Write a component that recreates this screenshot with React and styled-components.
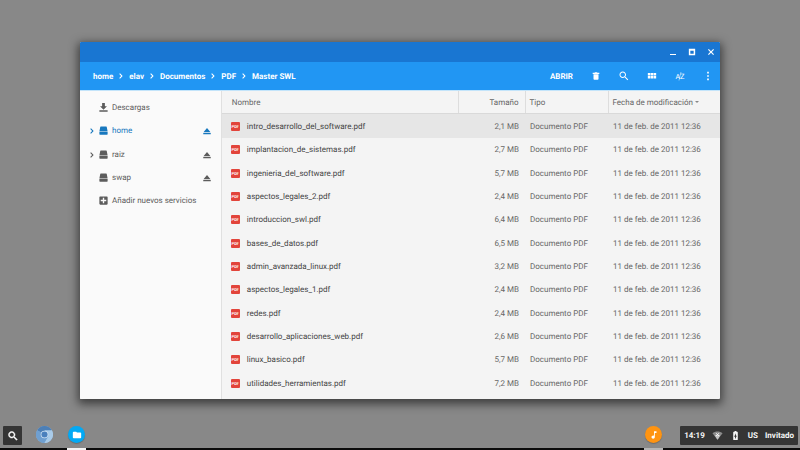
import React, { useState } from 'react';
import styled, { createGlobalStyle } from 'styled-components';

const GlobalStyle = createGlobalStyle`
  body {
    margin: 0;
    background: #888888;
    font-family: Roboto, 'Liberation Sans', sans-serif;
    font-size: 8px;
    text-rendering: geometricPrecision;
  }

  button {
    font: inherit;
    color: inherit;
    background: none;
    border: none;
    padding: 0;
    cursor: pointer;
    text-rendering: inherit;
  }
`;

const Desktop = styled.div`
  display: flex;
  flex-direction: column;
  min-height: 100vh;
`;

const Window = styled.main`
  flex: 1;
  display: flex;
  flex-direction: column;
  margin: 42px 10% 0;
  border-radius: 1px;
  overflow: hidden;
  background: #f4f4f4;
  box-shadow: 0 3px 10px 2px rgba(0, 0, 0, 0.55);
`;

const TitleBar = styled.div`
  display: flex;
  justify-content: flex-end;
  align-items: center;
  gap: 9px;
  height: 20px;
  padding: 0 4px;
  background: #1976d2;
  color: #fff;
`;

const Toolbar = styled.header`
  display: flex;
  justify-content: space-between;
  align-items: center;
  height: 28px;
  padding: 0 7px 0 13px;
  background: #2196f3;
  border-bottom: 1px solid #c3e4fa;
  color: #fff;
  font-weight: 700;
`;

const Breadcrumb = styled.nav`
  display: flex;
  align-items: center;
  gap: 4px;
`;

const Crumb = styled.a`
  color: #fff;
  text-decoration: none;
`;

const Actions = styled.div`
  display: flex;
  align-items: center;
  gap: 18px;
`;

const IconButton = styled.button`
  display: flex;
  align-items: center;
  justify-content: center;
  width: 10px;
  height: 16px;
`;

const TextButton = styled.button`
  height: 16px;
`;

const Icon = styled.svg`
  display: block;
  flex: none;
  width: ${(props) => props.$size || 10}px;
  height: ${(props) => props.$size || 10}px;
  fill: currentColor;
`;

const Body = styled.div`
  flex: 1;
  display: flex;
`;

const Sidebar = styled.aside`
  flex: none;
  width: 22%;
  padding-top: 5px;
  background: #fafafa;
  border-right: 1px solid #e0e0e0;
`;

const Places = styled.ul`
  list-style: none;
  margin: 0;
  padding: 0;
`;

const Place = styled.li`
  display: flex;
  align-items: center;
  height: 23px;
  padding: 0 9px 0 8px;
  margin-bottom: ${(props) => (props.$spaced ? 1 : 0)}px;
  color: ${(props) => (props.$active ? '#1878be' : '#5c5c5c')};
`;

const Expander = styled.span`
  display: flex;
  width: 10px;
`;

const PlaceButton = styled.button`
  flex: 1;
  display: flex;
  align-items: center;
  gap: 3px;
  text-align: left;
`;

const Files = styled.div`
  flex: 1;
  display: flex;
  padding-bottom: 4px;
`;

const Table = styled.table`
  width: 100%;
  table-layout: fixed;
  border-collapse: collapse;
  color: #666;
`;

const Column = styled.col`
  width: ${(props) => props.$width};
`;

const HeadCell = styled.th`
  height: 22px;
  padding: 0 6px 0 ${(props) => (props.$first ? 10 : 4)}px;
  border-bottom: 1px solid #d9d9d9;
  border-left: ${(props) => (props.$first ? 'none' : '1px solid #dddddd')};
  font-weight: 400;
  text-align: ${(props) => props.$align || 'left'};
  white-space: nowrap;
`;

const Row = styled.tr`
  background: ${(props) => (props.$selected ? '#e6e6e6' : 'transparent')};
`;

const Cell = styled.td`
  padding: 0 6px 0 5px;
  text-align: ${(props) => props.$align || 'left'};
  white-space: nowrap;
`;

const FileName = styled.div`
  display: flex;
  align-items: center;
  gap: 7px;
  padding-left: 4px;
  color: #444;
`;

const PdfBadge = styled.span`
  display: flex;
  align-items: center;
  justify-content: center;
  width: 9px;
  height: 9px;
  border-radius: 1px;
  background: #e2443b;
  color: #fff;
  font-size: 4px;
  font-weight: 700;
`;

const SortMark = styled.span`
  display: inline-block;
  margin-left: 2px;
  vertical-align: middle;
  border: 2px solid transparent;
  border-top-color: #888;
  border-bottom: none;
`;

const Shelf = styled.footer`
  display: flex;
  align-items: flex-end;
  height: 49px;
  padding: 0 2px 0 3px;
  border-bottom: 2px solid #0c0c0c;
`;

const SearchButton = styled.button`
  display: flex;
  align-items: center;
  justify-content: center;
  width: 19px;
  height: 19px;
  margin: 0 13px 3px 0;
  border-radius: 1px;
  background: #353535;
  color: #fff;
`;

const AppButton = styled.button`
  display: flex;
  justify-content: center;
  width: 19px;
  height: 24px;
  margin-bottom: -2px;
  margin-right: ${(props) => props.$gap || 0}px;
  border-bottom: 2px solid ${(props) => props.$mark || '#0c0c0c'};
`;

const AppDisc = styled.span`
  display: flex;
  align-items: center;
  justify-content: center;
  width: 17px;
  height: 17px;
  border-radius: 50%;
  background: ${(props) => props.$color};
  color: #fff;
  box-shadow: 0 1px 1px rgba(0, 0, 0, 0.2);
`;

const Spacer = styled.div`
  flex: 1;
`;

const Tray = styled.div`
  display: flex;
  align-items: center;
  height: 19px;
  margin-bottom: 3px;
  padding: 0 4px;
  border-radius: 1px;
  background: #353535;
  color: #f5f5f5;
  font-weight: 700;
  gap: 7px;
`;

const paths = {
  download: 'M19.500 9H15V2H9v7H4.500l7.500 8 7.500-8zM3 18v3h18v-3H3z',
  disk: 'M6.500 3h11l1.500 1 2 10H3L5 4zM3 15h18v5l-1 1H4l-1-1z',
  add: 'M19 3H5c-1.1 0-2 .9-2 2v14c0 1.1.9 2 2 2h14c1.1 0 2-.9 2-2V5c0-1.1-.9-2-2-2zm-1 10.500h-4.500V18h-3v-4.500H6v-3h4.500V6h3v4.500H18v3z',
  eject: 'M3 17h18v3H3zM12 5L3.500 15h17z',
  trash: 'M6 19c0 1.100.9 2 2 2h8c1.100 0 2-.9 2-2V8H6v11zM20 4h-4.500l-1-1h-5l-1 1H4v3h16V4z',
  search:
    'M15.500 14h-.79l-.28-.27C15.410 12.590 16 11.110 16 9.500 16 5.910 13.090 3 9.500 3S3 5.910 3 9.500 5.910 16 9.500 16c1.610 0 3.090-.59 4.230-1.570l.27.28v.79l5 4.990L20.490 19l-4.990-5zm-6 0C7.010 14 5 11.990 5 9.500S7.010 5 9.500 5 14 7.010 14 9.500 11.990 14 9.500 14z',
  grid: 'M2 5h6v6H2zM9 5h6v6H9zM16 5h6v6h-6zM2 12h6v6H2zM9 12h6v6H9zM16 12h6v6h-6z',
  more: 'M10 2h4v4h-4zM10 10h4v4h-4zM10 18h4v4h-4z',
  chevron: 'M9 4l8 8-8 8-2.300-2.300L12.400 12 6.700 6.300z',
  minimize: 'M3 18h18v3H3z',
  maximize: 'M2.500 2.500h19v19h-19zM7 8v9.500h10V8z',
  close: 'M5.500 3L12 9.500 18.500 3 21 5.500 14.500 12l6.500 6.500-2.500 2.500-6.500-6.500L5.500 21 3 18.500 9.500 12 3 5.500z',
  folder: 'M10 4H4c-1.100 0-2 .9-2 2v12c0 1.100.9 2 2 2h16c1.100 0 2-.9 2-2V8c0-1.100-.9-2-2-2h-8l-2-2z',
  note: 'M12 3v10.550c-.59-.34-1.270-.55-2-.55-2.210 0-4 1.790-4 4s1.790 4 4 4 4-1.790 4-4V7h4V3h-6z',
  battery:
    'M15.670 4H14V2h-4v2H8.330C7.600 4 7 4.600 7 5.330v15.330C7 21.400 7.600 22 8.330 22h7.330c.74 0 1.340-.6 1.340-1.330V5.330C17 4.600 16.400 4 15.670 4zM11 20v-5.500H9L13 7v5.500h2L11 20z',
};

function Glyph({ name, size, weight = 0 }) {
  return (
    <Icon viewBox="0 0 24 24" $size={size} aria-hidden="true">
      <path d={paths[name]} fillRule="evenodd" stroke="currentColor" strokeWidth={weight} />
    </Icon>
  );
}

// A and Z with the slash between them
function SortIcon() {
  return (
    <Icon viewBox="0 0 20 20" $size={10} aria-hidden="true">
      <text x="1" y="16" fontSize="14" fontWeight="400">A</text>
      <text x="10" y="16" fontSize="15" fontWeight="400">Z</text>
      <path d="M12 2L8 19" stroke="currentColor" strokeWidth="1" />
    </Icon>
  );
}

function ChromiumIcon() {
  return (
    <Icon viewBox="0 0 36 36" $size={17} aria-hidden="true">
      <circle cx="18" cy="18" r="18" fill="#8fb8e0" />
      <path d="M18 18L2.400 9A18 18 0 0 1 33.600 9z" fill="#4d7fb6" />
      <path d="M2.400 9A18 18 0 0 0 18 36l8-14-8-4z" fill="#6f9fd0" />
      <path d="M18 36A18 18 0 0 0 33.600 9H18l8 13z" fill="#a9cbe9" />
      <circle cx="18" cy="18" r="8" fill="#d3e4f4" />
      <circle cx="18" cy="18" r="6.500" fill="#4a80bd" />
    </Icon>
  );
}

function WifiIcon() {
  return (
    <Icon viewBox="0 0 24 24" $size={11} aria-hidden="true">
      <path d="M1 7C7 2 17 2 23 7L12 21z" fill="#8c8c8c" />
      <path d="M6 12c4-3 8-3 12 0l-6 9z" fill="#c4c4c4" />
      <path d="M9 7l6 6M15 7l-6 6" stroke="#fff" strokeWidth="2" />
    </Icon>
  );
}

const crumbs = ['home', 'elav', 'Documentos', 'PDF', 'Master SWL'];

const places = [
  { name: 'Descargas', icon: 'download' },
  { name: 'home', icon: 'disk', expand: true, eject: true },
  { name: 'raiz', icon: 'disk', expand: true, eject: true },
  { name: 'swap', icon: 'disk', eject: true },
  { name: 'Añadir nuevos servicios', icon: 'add' },
];

const files = [
  { name: 'intro_desarrollo_del_software.pdf', size: '2,1 MB' },
  { name: 'implantacion_de_sistemas.pdf', size: '2,7 MB' },
  { name: 'ingenieria_del_software.pdf', size: '5,7 MB' },
  { name: 'aspectos_legales_2.pdf', size: '2,4 MB' },
  { name: 'introduccion_swl.pdf', size: '6,4 MB' },
  { name: 'bases_de_datos.pdf', size: '6,5 MB' },
  { name: 'admin_avanzada_linux.pdf', size: '3,2 MB' },
  { name: 'aspectos_legales_1.pdf', size: '2,4 MB' },
  { name: 'redes.pdf', size: '2,4 MB' },
  { name: 'desarrollo_aplicaciones_web.pdf', size: '2,6 MB' },
  { name: 'linux_basico.pdf', size: '5,7 MB' },
  { name: 'utilidades_herramientas.pdf', size: '7,2 MB' },
];

function FileTable() {
  const [selected, setSelected] = useState(0);

  return (
    <Table>
      <colgroup>
        <Column />
        <Column $width="67px" />
        <Column $width="83px" />
        <Column $width="112px" />
      </colgroup>
      <thead>
        <tr>
          <HeadCell $first>Nombre</HeadCell>
          <HeadCell $align="right">Tamaño</HeadCell>
          <HeadCell>Tipo</HeadCell>
          <HeadCell>
            Fecha de modificación
            <SortMark />
          </HeadCell>
        </tr>
      </thead>
      <tbody>
        {files.map((file, index) => (
          <Row key={file.name} $selected={index === selected} onClick={() => setSelected(index)}>
            <Cell>
              <FileName>
                <PdfBadge>PDF</PdfBadge>
                {file.name}
              </FileName>
            </Cell>
            <Cell $align="right">{file.size}</Cell>
            <Cell>Documento PDF</Cell>
            <Cell>11 de feb. de 2011 12:36</Cell>
          </Row>
        ))}
      </tbody>
    </Table>
  );
}

function App() {
  const [place, setPlace] = useState('home');

  return (
    <Desktop>
      <GlobalStyle />
      <Window>
        <TitleBar>
          <IconButton aria-label="Minimizar"><Glyph name="minimize" size={8} /></IconButton>
          <IconButton aria-label="Maximizar"><Glyph name="maximize" size={8} /></IconButton>
          <IconButton aria-label="Cerrar"><Glyph name="close" size={8} /></IconButton>
        </TitleBar>
        <Toolbar>
          <Breadcrumb>
            {crumbs.map((crumb, index) => (
              <React.Fragment key={crumb}>
                {index > 0 && <Glyph name="chevron" size={8} />}
                <Crumb href="#">{crumb}</Crumb>
              </React.Fragment>
            ))}
          </Breadcrumb>
          <Actions>
            <TextButton>ABRIR</TextButton>
            <IconButton aria-label="Eliminar"><Glyph name="trash" /></IconButton>
            <IconButton aria-label="Buscar"><Glyph name="search" size={12} /></IconButton>
            <IconButton aria-label="Vista"><Glyph name="grid" /></IconButton>
            <IconButton aria-label="Ordenar"><SortIcon /></IconButton>
            <IconButton aria-label="Más"><Glyph name="more" /></IconButton>
          </Actions>
        </Toolbar>
        <Body>
          <Sidebar>
            <Places>
              {places.map((item, index) => (
                <Place key={item.name} $active={item.name === place} $spaced={index === 1}>
                  <Expander>{item.expand && <Glyph name="chevron" size={8} />}</Expander>
                  <PlaceButton onClick={() => setPlace(item.name)}>
                    <Glyph name={item.icon} size={11} />
                    {item.name}
                  </PlaceButton>
                  {item.eject && (
                    <IconButton aria-label="Expulsar"><Glyph name="eject" size={10} /></IconButton>
                  )}
                </Place>
              ))}
            </Places>
          </Sidebar>
          <Files>
            <FileTable />
          </Files>
        </Body>
      </Window>
      <Shelf>
        <SearchButton aria-label="Buscar"><Glyph name="search" size={12} weight={1} /></SearchButton>
        <AppButton aria-label="Chromium" $gap={13}><ChromiumIcon /></AppButton>
        <AppButton aria-label="Archivos" $mark="#f5f5f5">
          <AppDisc $color="#03a9f4"><Glyph name="folder" /></AppDisc>
        </AppButton>
        <Spacer />
        <AppButton aria-label="Música" $gap={17} $mark="#b5b5b5">
          <AppDisc $color="#ff9411"><Glyph name="note" /></AppDisc>
        </AppButton>
        <Tray>
          <span>14:19</span>
          <WifiIcon />
          <Glyph name="battery" size={11} />
          <span>US</span>
          <span>Invitado</span>
        </Tray>
      </Shelf>
    </Desktop>
  );
}

export default App;
